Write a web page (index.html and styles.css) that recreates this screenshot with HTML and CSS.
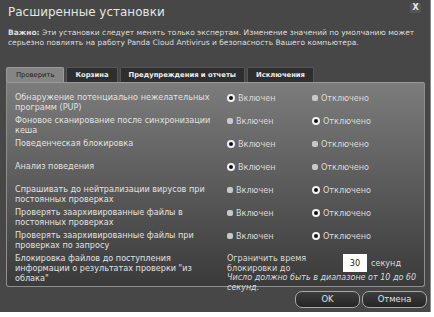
FILE: index.html
```html
<!DOCTYPE html>
<html lang="ru">
<head>
<meta charset="UTF-8" />
<meta name="viewport" content="width=device-width, initial-scale=1" />
<title>Расширенные установки</title>
<link rel="stylesheet" href="styles.css">
</head>
<body>

<div class="dialog">
  <div class="close-btn">X</div>
  <h1 class="title">Расширенные установки</h1>
  <p class="warning"><b>Важно:</b> Эти установки следует менять только экспертам. Изменение значений по умолчанию может серьезно повлиять на работу Panda Cloud Antivirus и безопасность Вашего компьютера.</p>

  <div class="tabs">
    <div class="tab active">Проверить</div>
    <div class="tab">Корзина</div>
    <div class="tab">Предупреждения и отчеты</div>
    <div class="tab">Исключения</div>
  </div>

  <div class="panel">
    <div class="row">
      <div class="label">Обнаружение потенциально нежелательных программ (PUP)</div>
      <div class="opt"><span class="radio on"></span>Включен</div>
      <div class="opt"><span class="radio"></span>Отключено</div>
    </div>
    <div class="row">
      <div class="label">Фоновое сканирование после синхронизации кеша</div>
      <div class="opt"><span class="radio"></span>Включен</div>
      <div class="opt"><span class="radio on"></span>Отключено</div>
    </div>
    <div class="row">
      <div class="label">Поведенческая блокировка</div>
      <div class="opt"><span class="radio on"></span>Включен</div>
      <div class="opt"><span class="radio"></span>Отключено</div>
    </div>
    <div class="row">
      <div class="label">Анализ поведения</div>
      <div class="opt"><span class="radio on"></span>Включен</div>
      <div class="opt"><span class="radio"></span>Отключено</div>
    </div>
    <div class="row">
      <div class="label">Спрашивать до нейтрализации вирусов при постоянных проверках</div>
      <div class="opt"><span class="radio"></span>Включен</div>
      <div class="opt"><span class="radio on"></span>Отключено</div>
    </div>
    <div class="row">
      <div class="label">Проверять заархивированные файлы в постоянных проверках</div>
      <div class="opt"><span class="radio"></span>Включен</div>
      <div class="opt"><span class="radio on"></span>Отключено</div>
    </div>
    <div class="row">
      <div class="label">Проверять заархивированные файлы при проверках по запросу</div>
      <div class="opt"><span class="radio"></span>Включен</div>
      <div class="opt"><span class="radio on"></span>Отключено</div>
    </div>
    <div class="row last">
      <div class="label">Блокировка файлов до поступления информации о результатах проверки "из облака"</div>
      <div class="limit">
        <div class="limit-line">
          <span class="limit-text">Ограничить время блокировки до</span>
          <span class="num-box">30</span>
          <span>секунд</span>
        </div>
        <div class="hint">Число должно быть в диапазоне от 10 до 60 секунд.</div>
      </div>
    </div>
  </div>

  <div class="buttons">
    <div class="btn">OK</div>
    <div class="btn">Отмена</div>
  </div>
</div>

</body>
</html>
```

FILE: styles.css
```css
body {
  margin: 0;
  background-color: #fff;
  font-family: 'DejaVu Sans', sans-serif;
}
.dialog {
  position: relative;
  width: 431px;
  height: 312px;
  background-color: #474747;
  border-right: 1px solid #8a8a8a;
  box-sizing: border-box;
  color: #dcdcdc;
}
.close-btn {
  position: absolute;
  top: 3px;
  right: 9px;
  width: 11px;
  height: 10px;
  background-color: #555;
  border-radius: 2px;
  font-size: 8px;
  font-weight: bold;
  line-height: 10px;
  text-align: center;
  color: #eee;
}
.title {
  margin: 0;
  padding: 5px 0 0 8px;
  font-size: 12px;
  font-weight: normal;
  line-height: 14px;
  color: #e4e4e4;
}
.warning {
  margin: 9px 0 0;
  padding: 0 10px 0 8px;
  font-size: 7.5px;
  line-height: 10px;
  color: #dedede;
}
.tabs {
  display: flex;
  gap: 2px;
  margin-top: 19px;
  padding-left: 6px;
}
.tab {
  height: 14px;
  padding: 0 8px;
  background-color: #2e2e2e;
  border: 1px solid #555;
  border-bottom: none;
  border-radius: 2px 2px 0 0;
  font-size: 6.8px;
  font-weight: bold;
  line-height: 15px;
  color: #eee;
}
.tab.active {
  padding: 0 9px;
  background-color: #858585;
  border-color: #9a9a9a;
  font-weight: normal;
  color: #1e1e1e;
}
.panel {
  width: 419px;
  height: 205px;
  margin-left: 6px;
  padding: 9px 0 0 8px;
  box-sizing: border-box;
  background: linear-gradient(#7c7c7c, #3a3a3a);
  border: 1px solid #8f8f8f;
  border-top-color: #9a9a9a;
  border-radius: 0 2px 3px 3px;
}
.row {
  display: grid;
  grid-template-columns: 212px 85px 1fr;
  height: 23px;
  font-size: 8.1px;
  line-height: 10px;
  color: #e2e2e2;
}
.row.last {
  height: auto;
}
.label {
  padding-right: 4px;
}
.opt {
  display: flex;
  align-items: center;
  gap: 3px;
  height: 12px;
  color: #dadada;
}
.radio {
  width: 6px;
  height: 6px;
  background-color: #c8c8c8;
  border-radius: 2px;
}
.radio.on {
  width: 4px;
  height: 4px;
  background-color: #111;
  border: 2px solid #f2f2f2;
  border-radius: 50%;
}
.limit {
  grid-column: 2 / 4;
  color: #dadada;
}
.limit-line {
  display: flex;
  align-items: center;
  gap: 4px;
}
.limit-text {
  width: 112px;
}
.num-box {
  width: 24px;
  height: 18px;
  background-color: #fff;
  color: #222;
  line-height: 18px;
  text-align: center;
}
.hint {
  width: 195px;
  font-style: italic;
  font-size: 8px;
}
.buttons {
  display: flex;
  justify-content: flex-end;
  gap: 2px;
  margin-top: 4px;
  padding-right: 3px;
}
.btn {
  height: 15px;
  border: 1px solid #a8a8a8;
  border-radius: 7px;
  background: linear-gradient(#3c3c3c, #262626);
  font-size: 8.4px;
  line-height: 15px;
  text-align: center;
  color: #e0e0e0;
}
.btn:first-child {
  width: 63px;
}
.btn:last-child {
  width: 63px;
}
```
